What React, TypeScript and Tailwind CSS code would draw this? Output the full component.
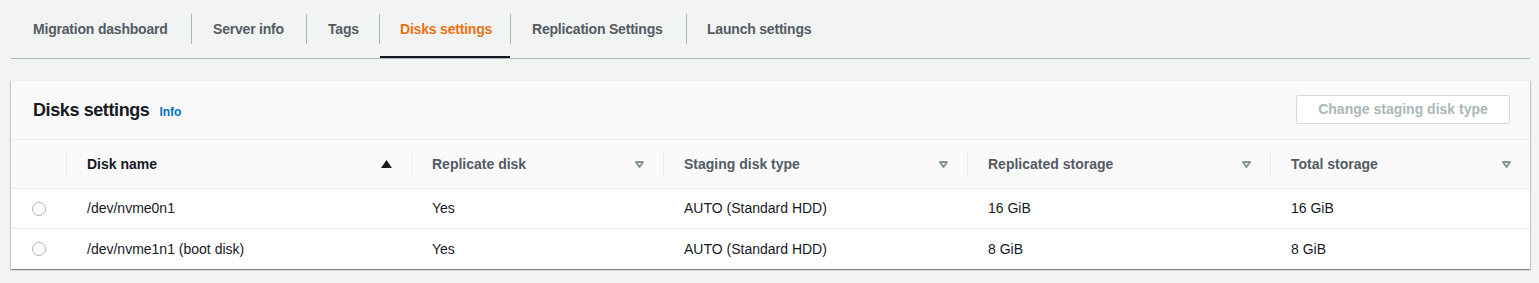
import React from 'react';

// tab widths measured between separators
const tabs = [
  { label: 'Migration dashboard', w: 'w-[180px] pl-[22px]' },
  { label: 'Server info', w: 'w-[114px] pl-[21px]' },
  { label: 'Tags', w: 'w-[72px] pl-[21px]' },
  { label: 'Disks settings', w: 'w-[130px] pl-[20px]' },
  { label: 'Replication Settings', w: 'w-[175px] pl-[21px]' },
  { label: 'Launch settings', w: 'w-[150px] pl-[20px]' },
];

const columns = [
  { title: 'Disk name', sorted: true },
  { title: 'Replicate disk' },
  { title: 'Staging disk type' },
  { title: 'Replicated storage' },
  { title: 'Total storage' },
];

const rows = [
  ['/dev/nvme0n1', 'Yes', 'AUTO (Standard HDD)', '16 GiB', '16 GiB'],
  ['/dev/nvme1n1 (boot disk)', 'Yes', 'AUTO (Standard HDD)', '8 GiB', '8 GiB'],
];

function SortIcon({ active }: { active?: boolean }) {
  if (active) {
    return (
      <svg width="11" height="8" viewBox="0 0 11 8">
        <path d="M5.5 0 L11 8 L0 8 Z" fill="#16191f" />
      </svg>
    );
  }
  return (
    <svg width="9" height="7" viewBox="0 0 9 7">
      <path d="M1 1 L8 1 L4.5 6 Z" fill="none" stroke="#879596" strokeWidth="2" strokeLinejoin="round" />
    </svg>
  );
}

const gridCols = 'grid grid-cols-[55px_345px_252px_304px_303px_1fr]';

export default function App() {
  const active = 'Disks settings';

  return (
    <div
      className="w-full h-[283px] bg-[#f2f3f3] pl-[11px] pr-[9px] text-[14px] text-[#16191f]"
      style={{ fontFamily: '"Liberation Sans", Arial, sans-serif' }}
    >
      {/* tabs */}
      <div className="flex h-[59px] border-b border-[#aab7b8]">
        {tabs.map((t, i) => (
          <React.Fragment key={t.label}>
            {i > 0 && <div className="w-px h-[30px] mt-[14px] bg-[#aab7b8]" />}
            <div
              className={
                'relative flex items-center h-full font-bold whitespace-nowrap tracking-[-0.2px] ' +
                t.w +
                ' ' +
                (t.label === active ? 'text-[#ec7211]' : 'text-[#545b64]')
              }
            >
              {t.label}
              {t.label === active && (
                <div className="absolute left-0 right-0 bottom-0 h-[2px] bg-[#16191f]" />
              )}
            </div>
          </React.Fragment>
        ))}
      </div>

      {/* panel */}
      <div className="mt-[21px] bg-white border-t border-[#eaeded] shadow-[0_1px_1px_0_rgba(0,28,36,0.3),1px_1px_1px_0_rgba(0,28,36,0.15),-1px_1px_1px_0_rgba(0,28,36,0.15)]">
        <div className="flex items-center justify-between h-[59px] bg-[#fafafa] border-b border-[#eaeded] pl-[22px] pr-[20px]">
          <div className="flex items-baseline">
            <h2 className="text-[18px] font-bold tracking-[-0.4px] text-[#16191f]">Disks settings</h2>
            <span className="ml-[10px] text-[12px] font-bold text-[#0073bb]">Info</span>
          </div>
          <button className="h-[29px] w-[214px] border border-[#d5dbdb] bg-white rounded-[2px] font-bold text-[#aab7b8] mt-[-1px]">
            Change staging disk type
          </button>
        </div>

        <div className={gridCols + ' h-[49px] bg-[#fafafa] border-b border-[#eaeded]'}>
          <div />
          {columns.map((c) => (
            <div key={c.title} className="flex items-center">
              <span className="w-px h-[24px] bg-[#eaeded]" />
              <div className="flex-1 flex items-center justify-between pl-[20px] pr-[19px]">
                <span className={'font-bold ' + (c.sorted ? 'text-[#16191f]' : 'text-[#545b64]')}>
                  {c.title}
                </span>
                <SortIcon active={c.sorted} />
              </div>
            </div>
          ))}
        </div>

        {rows.map((r, i) => (
          <div
            key={i}
            className={gridCols + ' h-[40px] ' + (i < rows.length - 1 ? 'border-b border-[#eaeded]' : '')}
          >
            <div className="flex items-center justify-center">
              <span className="w-[14px] h-[14px] rounded-full border border-[#aab7b8] bg-white" />
            </div>
            {r.map((cell, j) => (
              <div key={j} className="flex items-center pl-[21px]">
                {cell}
              </div>
            ))}
          </div>
        ))}
      </div>
    </div>
  );
}
